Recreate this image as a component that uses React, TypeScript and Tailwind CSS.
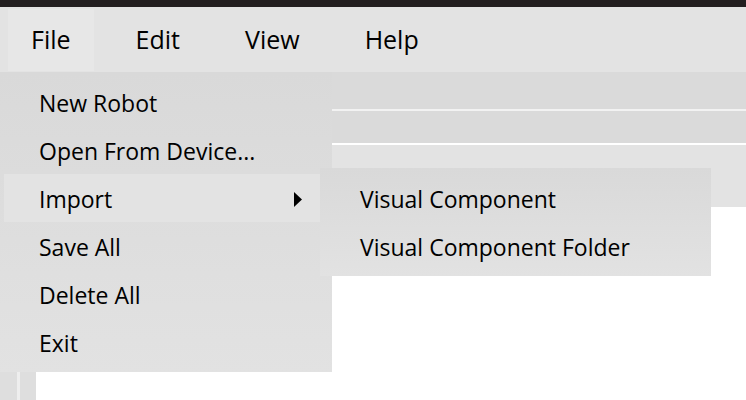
import { useState } from 'react';

const menus = ['File', 'Edit', 'View', 'Help'];

const fileItems = ['New Robot', 'Open From Device...', 'Import', 'Save All', 'Delete All', 'Exit'];

const importItems = ['Visual Component', 'Visual Component Folder'];

const App = () => {
  const [open] = useState('File');

  return (
    <div
      className="relative h-[400px] w-[746px] overflow-hidden bg-white text-black"
      style={{ fontFamily: '"Open Sans", "Noto Sans", sans-serif' }}
    >
      <div className="h-[7px] bg-[#231f20]" />

      {/* menu bar */}
      <div className="flex h-[65px] items-center gap-[19px] bg-[#e3e3e3] pl-2">
        {menus.map((menu) => (
          <div
            key={menu}
            className={`flex h-[62px] items-center px-[23px] text-[25px] ${
              open === menu ? 'bg-[#e7e7e7]' : ''
            }`}
          >
            {menu}
          </div>
        ))}
      </div>

      {/* window content behind the menu */}
      <div className="h-[37px] bg-[#dadada]" />
      <div className="h-[2px] bg-[#f2f2f2]" />
      <div className="h-[32px] bg-[#dadada]" />
      <div className="h-[2px] bg-white" />
      <div className="h-[62px] bg-[#e3e3e3]" />
      <div className="flex h-[200px]">
        <div className="w-[17px] bg-[#dedede]" />
        <div className="w-[3px] bg-[#eeeeee]" />
        <div className="w-[16px] bg-[#dedede]" />
      </div>

      {/* File dropdown */}
      <div className="absolute left-0 top-[72px] w-[332px] bg-gradient-to-b from-[#d9d9d9] to-[#e2e2e2] py-[6px]">
        {fileItems.map((item) => (
          <div
            key={item}
            className={`ml-1 mr-3 flex h-12 items-center justify-between pl-[35px] pr-[18px] pt-[2px] text-[23px] ${
              item === 'Import' ? 'bg-[#e3e3e3]' : ''
            }`}
          >
            <span>{item}</span>
            {item === 'Import' && (
              <svg width="8" height="15" viewBox="0 0 8 15">
                <path d="M0 0 L8 7.5 L0 15 Z" fill="#000" />
              </svg>
            )}
          </div>
        ))}
      </div>

      {/* Import submenu */}
      <div className="absolute left-[320px] top-[168px] w-[391px] bg-gradient-to-b from-[#d9d9d9] to-[#e2e2e2] py-[6px]">
        {importItems.map((item) => (
          <div key={item} className="flex h-12 items-center pl-10 pt-[2px] text-[23px]">
            {item}
          </div>
        ))}
      </div>
    </div>
  );
};

export default App;
